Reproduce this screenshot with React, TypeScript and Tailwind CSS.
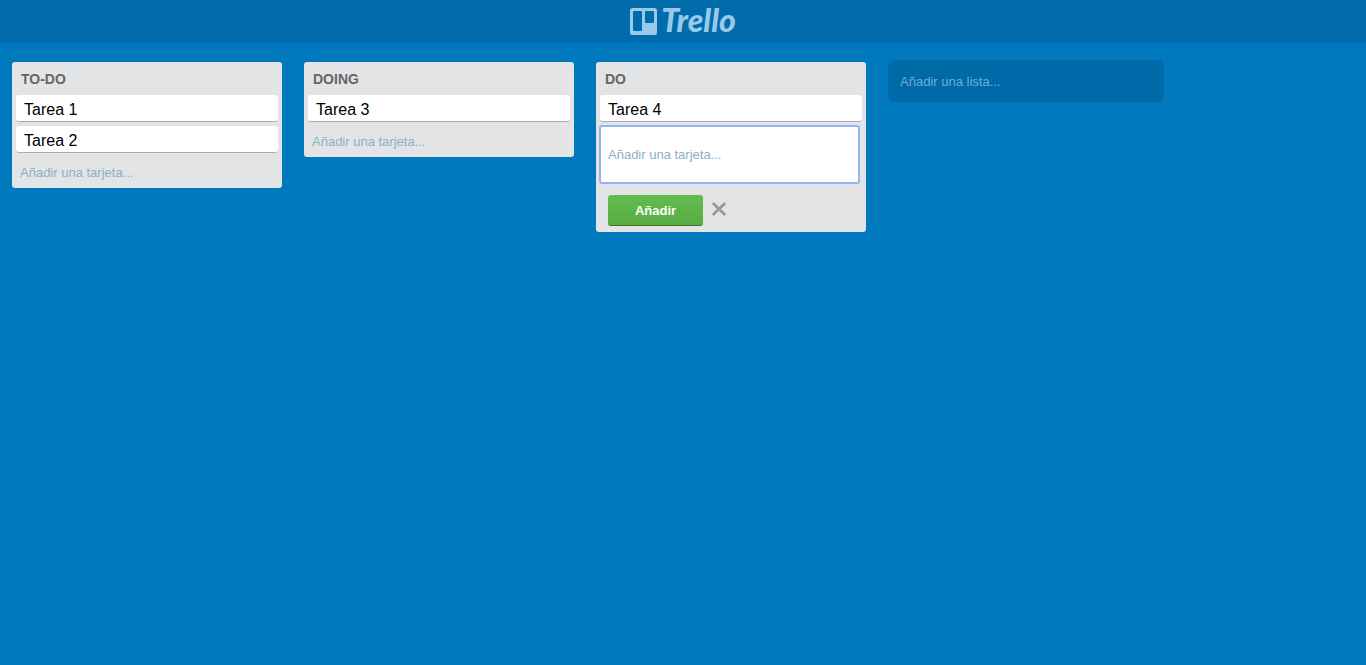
import { useState } from 'react';

type ListData = { title: string; cards: string[]; composing?: boolean };

const lists: ListData[] = [
  { title: 'TO-DO', cards: ['Tarea 1', 'Tarea 2'] },
  { title: 'DOING', cards: ['Tarea 3'] },
  { title: 'DO', cards: ['Tarea 4'], composing: true },
];

function Logo() {
  return (
    <a href="#" aria-label="Trello" className="flex items-center gap-1 pb-1 text-[#99c9e9]">
      <svg width="27" height="27" viewBox="0 0 27 27" fill="currentColor" className="mt-1" aria-hidden="true">
        <path
          fillRule="evenodd"
          d="M2.500 0h22a2.500 2.500 0 0 1 2.500 2.500v22a2.500 2.500 0 0 1-2.500 2.500h-22A2.500 2.500 0 0 1 0 24.500v-22A2.500 2.500 0 0 1 2.500 0ZM4 3A1 1 0 0 0 3 4v18a1 1 0 0 0 1 1h7a1 1 0 0 0 1-1V4a1 1 0 0 0-1-1ZM16 3a1 1 0 0 0-1 1v10a1 1 0 0 0 1 1h7a1 1 0 0 0 1-1V4a1 1 0 0 0-1-1Z"
        />
      </svg>
      <span className="font-['Lato',sans-serif] text-[32px] leading-8 font-black italic">Trello</span>
    </a>
  );
}

function Composer({ onAdd, onClose }: { onAdd: (text: string) => void; onClose: () => void }) {
  const [text, setText] = useState('');
  return (
    <form
      className="-mt-px"
      onSubmit={(e) => {
        e.preventDefault();
        if (text.trim()) onAdd(text.trim());
        setText('');
      }}
    >
      <input
        aria-label="Añadir una tarjeta"
        placeholder="Añadir una tarjeta..."
        value={text}
        onChange={(e) => setText(e.target.value)}
        className="-ml-px block h-[59px] w-[261px] rounded-[3px] border-2 border-[#8fb5f2] bg-white px-[7px] text-[13px] text-black outline-none placeholder:text-[#8cb0c8]"
      />
      <div className="flex items-center gap-2 px-2 pt-[11px] pb-1.5">
        <button
          type="submit"
          className="h-[31px] w-[95px] rounded-[3px] border-b border-[#3f6f21] bg-linear-to-b from-[#61bd4f] to-[#5aac44] pt-px text-[13px] font-bold text-white"
        >
          Añadir
        </button>
        <button type="button" aria-label="Cerrar" onClick={onClose} className="-mt-1 text-[#999999]">
          <svg width="16" height="16" viewBox="0 0 16 16" fill="none" stroke="currentColor" strokeWidth="2.8" aria-hidden="true">
            <path d="M1.800 2l12.400 12M14.200 2L1.800 14" />
          </svg>
        </button>
      </div>
    </form>
  );
}

function List({ title, cards, composing = false }: ListData) {
  const [items, setItems] = useState(cards);
  const [open, setOpen] = useState(composing);
  return (
    <section className="w-[270px] shrink-0 rounded-[3px] bg-[#e2e4e6] px-1">
      <h2 className="px-[5px] pt-2 pb-[7px] text-[14px] leading-[18px] font-bold text-[#666666]">{title}</h2>
      <ul className="flex flex-col gap-1 pb-1">
        {items.map((card, i) => (
          <li key={i} className="rounded-[3px] border-b border-[#a8abad] bg-white px-2 pt-1 text-[16px] leading-[22px] text-black">
            {card}
          </li>
        ))}
      </ul>
      {open ? (
        <Composer onAdd={(t) => setItems([...items, t])} onClose={() => setOpen(false)} />
      ) : (
        <button
          type="button"
          onClick={() => setOpen(true)}
          className="block w-full px-1 pt-[7px] pb-1.5 text-left text-[13px] leading-[18px] text-[#8cb0c8]"
        >
          Añadir una tarjeta...
        </button>
      )}
    </section>
  );
}

export default function App() {
  return (
    <div className="min-h-screen bg-[#0079bf] font-['Liberation_Sans',Arial,sans-serif]">
      <header className="flex h-[43px] items-center justify-center bg-[#006cac]">
        <Logo />
      </header>
      <main className="flex items-start gap-[22px] px-3 pt-[19px]">
        {lists.map((list) => (
          <List key={list.title} {...list} />
        ))}
        <input
          aria-label="Añadir una lista"
          placeholder="Añadir una lista..."
          className="-mt-0.5 h-[42px] w-[276px] rounded-md bg-[#006aa8] px-3 text-[13px] text-white outline-none placeholder:text-[#72abd0]"
        />
      </main>
    </div>
  );
}
